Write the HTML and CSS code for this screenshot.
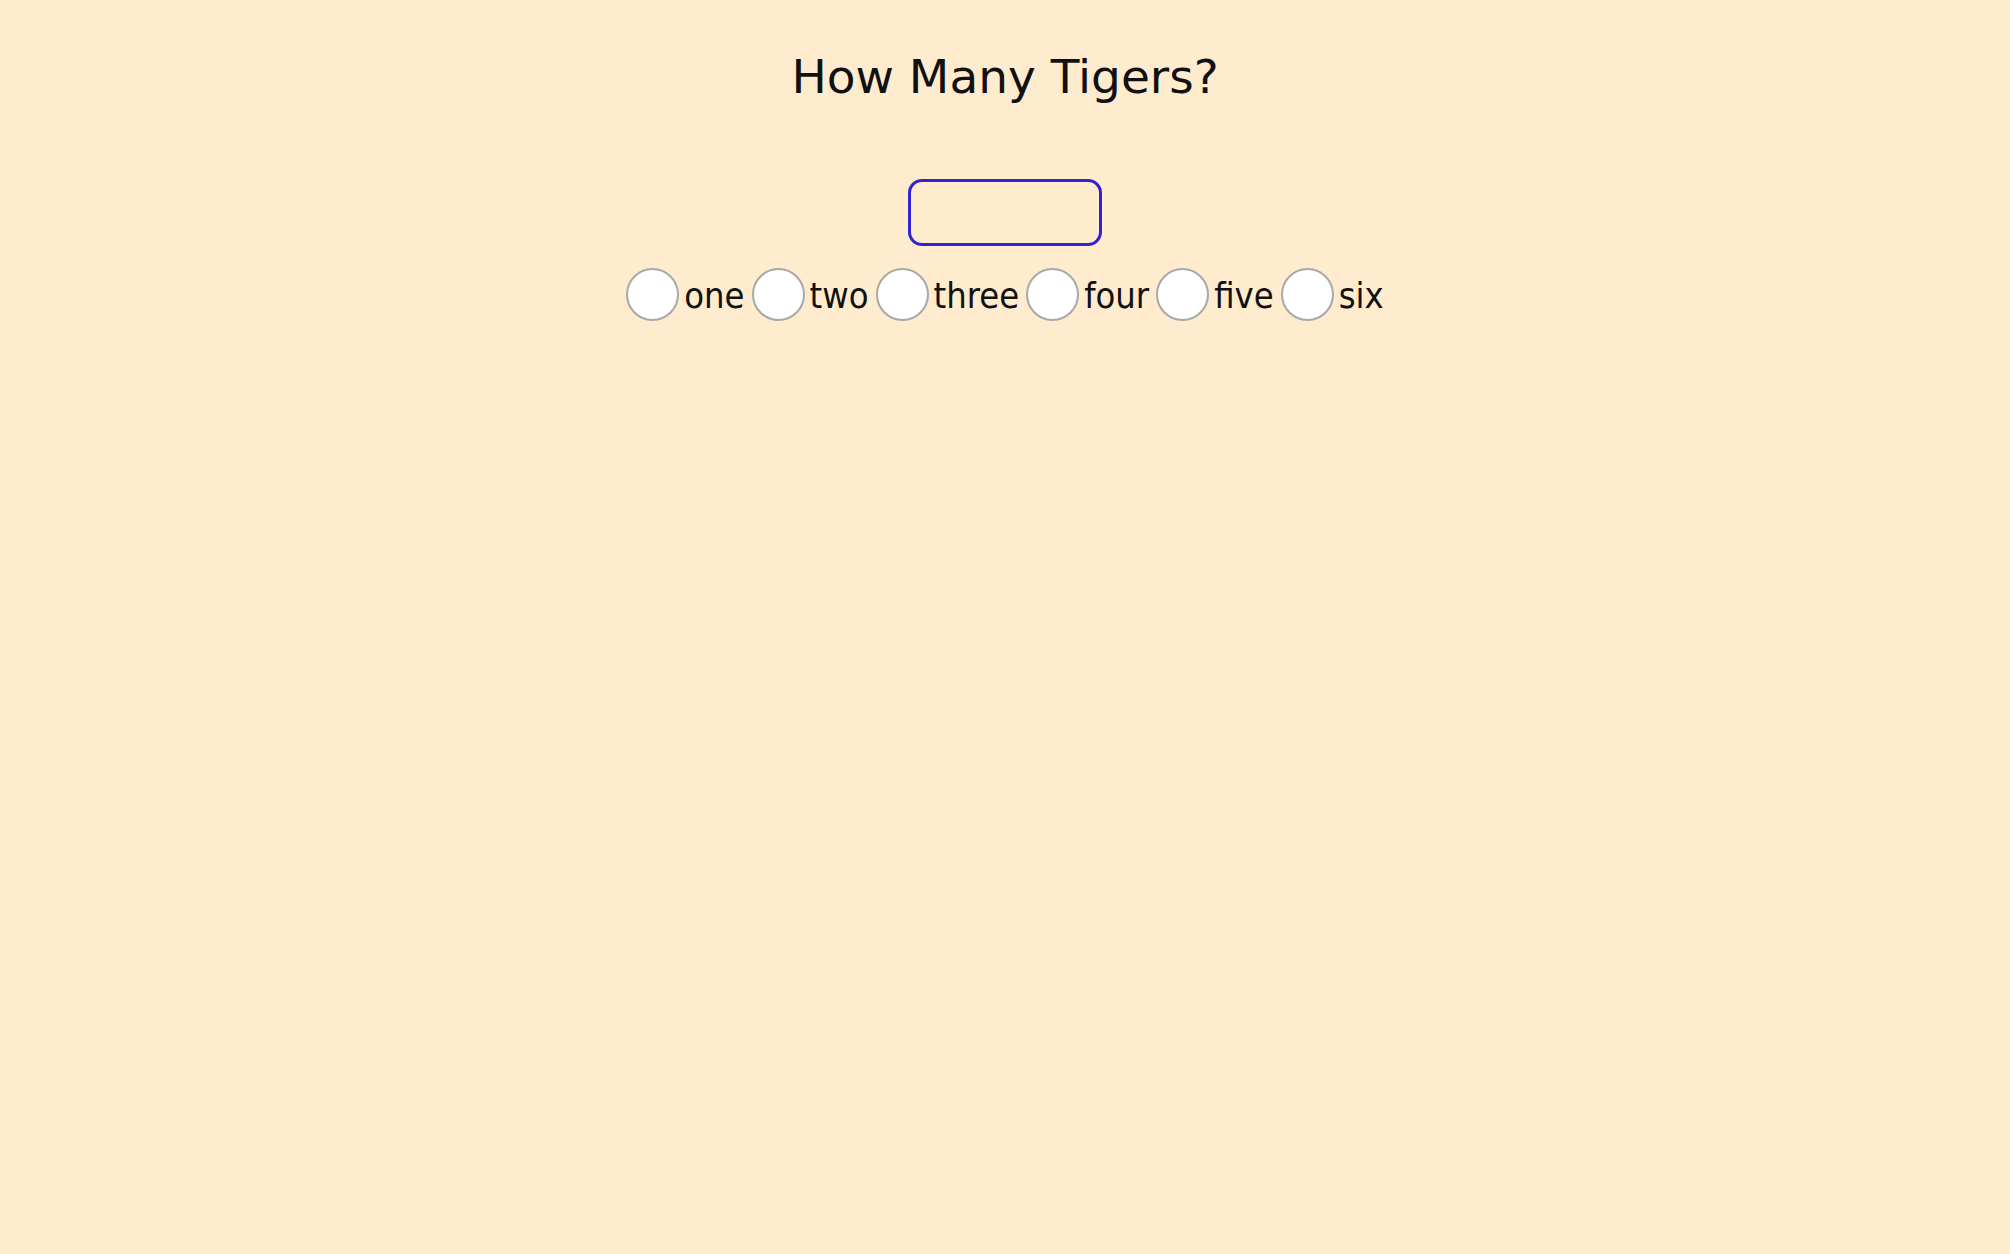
FILE: index.html
```html
<!DOCTYPE html>
<html lang="en">
<head>
<meta charset="utf-8">
<title>How Many Tigers?</title>
<link rel="stylesheet" href="styles.css">
</head>
<body>
<main class="quiz">
  <h1 class="quiz-title">How Many Tigers?</h1>
  <input class="answer-box" type="text" aria-label="answer">
  <div class="choices">
    <label class="choice"><input type="radio" name="n" value="1"><span>one</span></label>
    <label class="choice"><input type="radio" name="n" value="2"><span>two</span></label>
    <label class="choice"><input type="radio" name="n" value="3"><span>three</span></label>
    <label class="choice"><input type="radio" name="n" value="4"><span>four</span></label>
    <label class="choice"><input type="radio" name="n" value="5"><span>five</span></label>
    <label class="choice"><input type="radio" name="n" value="6"><span>six</span></label>
  </div>
</main>
</body>
</html>
```
FILE: styles.css
```css
html, body {
  margin: 0;
  padding: 0;
  height: 100%;
}
body {
  background: #ffebcd;
  color: #111;
  font-family: "DejaVu Sans Condensed", "DejaVu Sans", sans-serif;
  font-stretch: condensed;
}
.quiz {
  display: flex;
  flex-direction: column;
  align-items: center;
  padding-top: 49px;
}
.quiz-title {
  margin: 0;
  font-family: "DejaVu Sans", sans-serif;
  font-stretch: normal;
  font-size: 47px;
  letter-spacing: 0;
  font-weight: normal;
  line-height: 56px;
}
.answer-box {
  margin-top: 74px;
  box-sizing: border-box;
  width: 194px;
  height: 67px;
  border: 3px solid #3322d4;
  border-radius: 14px;
  background: transparent;
  outline: none;
  font: inherit;
}
.choices {
  margin-top: 22px;
  display: flex;
  align-items: center;
  gap: 7px;
  font-size: 36px;
}
.choice {
  display: flex;
  align-items: center;
  gap: 5px;
}
.choice input {
  appearance: none;
  -webkit-appearance: none;
  margin: 0;
  width: 53px;
  height: 53px;
  box-sizing: border-box;
  border: 2px solid #a8a8a8;
  border-radius: 50%;
  background: #fff;
}
.choice span {
  line-height: 42px;
  padding-top: 2px;
}
```
